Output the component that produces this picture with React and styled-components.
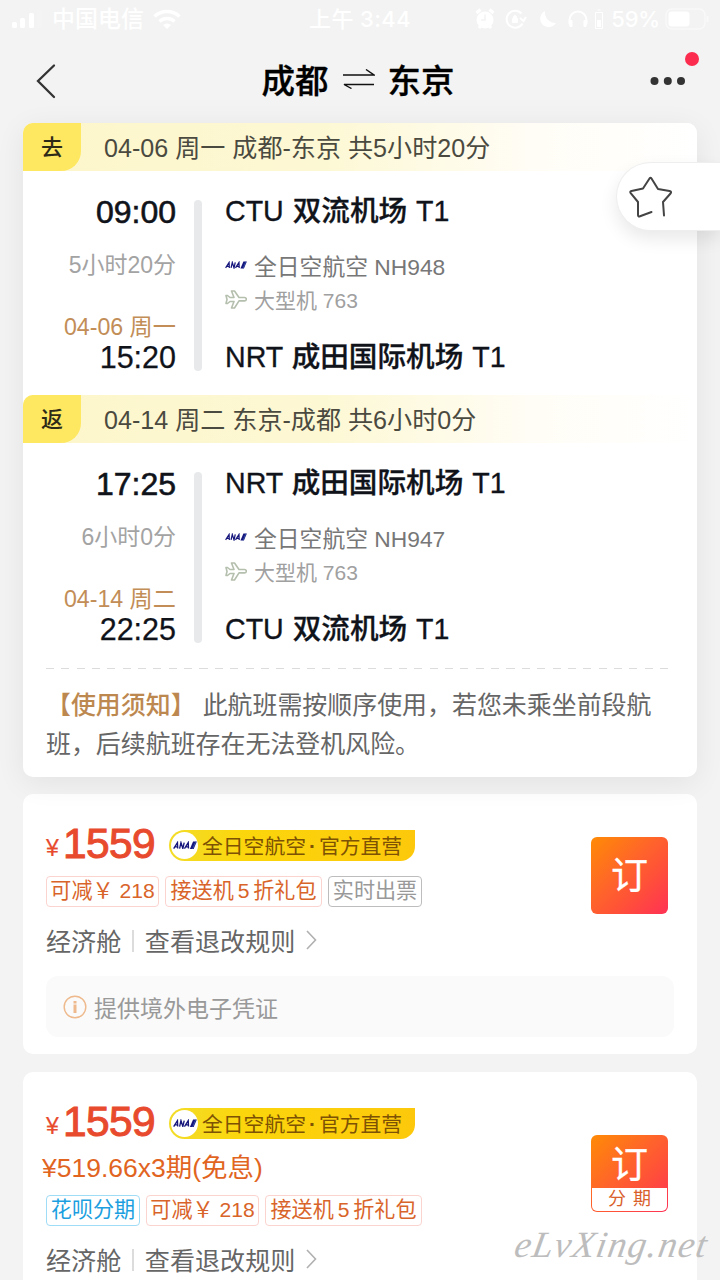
import React from 'react';
import styled, { createGlobalStyle, css } from 'styled-components';

const GlobalStyle = createGlobalStyle`
  * { box-sizing: border-box; }
  html, body { margin: 0; padding: 0; background: #f3f3f3; }
  body {
    width: 720px;
    height: 1280px;
    overflow: hidden;
    font-family: "Liberation Sans", "Noto Sans CJK SC", sans-serif;
    color: #10131a;
    white-space: nowrap;
  }
  svg { display: block; flex: none; }
`;

const Screen = styled.main`
  position: relative;
  width: 720px;
  height: 1280px;
  overflow: hidden;
  background: #f3f3f3;
`;

const StatusBar = styled.div`
  display: grid;
  grid-template-columns: 1fr auto 1fr;
  align-items: center;
  height: 38px;
  padding: 0 11px;
  color: #fff;
  font: 500 22px/38px Inter, "Noto Sans CJK SC", sans-serif;
`;

const StatusGroup = styled.div`
  display: flex;
  align-items: center;
  justify-content: ${(p) => (p.$end ? 'flex-end' : 'flex-start')};
  gap: ${(p) => p.$gap}px;
`;

const Carrier = styled.span`
  font-size: 23px;
`;

const Clock = styled.span`
  letter-spacing: 0.4px;
`;

const Percent = styled.span`
  margin-left: 3px;
  font-size: 22px;
  letter-spacing: -0.2px;
`;

const NavBar = styled.header`
  display: grid;
  grid-template-columns: 100px 1fr 100px;
  align-items: center;
  height: 85px;
`;

const BackButton = styled.div`
  padding-left: 34px;
`;

const Title = styled.h1`
  display: flex;
  align-items: center;
  justify-content: center;
  gap: 13px;
  margin: 0;
  padding: 0 4px 4px 0;
  font: 500 33.5px/48px "Noto Sans CJK SC", sans-serif;
  color: #000;
  -webkit-text-stroke: 0.3px #000;
`;

const MoreButton = styled.div`
  position: relative;
  padding-left: 30px;
`;

const UnreadDot = styled.i`
  position: absolute;
  left: 65px;
  top: -24px;
  width: 14px;
  height: 14px;
  border-radius: 50%;
  background: #fb2c4d;
`;

const FlightCard = styled.section`
  position: relative;
  z-index: 1;
  width: 674px;
  height: 654px;
  margin: 0 auto 17px;
  border-radius: 10px;
  background: #fff;
  box-shadow: 0 6px 30px rgba(0, 0, 0, 0.07);
`;

const Leg = styled.div`
  height: 272px;
`;

const LegHeader = styled.div`
  display: flex;
  height: 48px;
  line-height: 50px;
  border-radius: 10px 10px 0 0;
  background: linear-gradient(90deg, #fdf6cb 0%, #fdf8d4 45%, #fffdf5 75%, #fff 100%);
`;

const LegBadge = styled.div`
  width: 58px;
  border-radius: 10px 0 20px 0;
  background: #fee761;
  color: #2e2a18;
  font-size: 22px;
  font-weight: 500;
  text-align: center;
`;

const LegSummary = styled.div`
  padding-left: 23px;
  color: #4b4a40;
  font-size: 25.1px;
`;

const LegBody = styled.div`
  display: grid;
  grid-template-columns: 153px 8px 1fr;
  column-gap: 18px;
  height: 224px;
  padding-top: 23px;
`;

const TimeColumn = styled.div`
  display: flex;
  flex-direction: column;
  align-items: flex-end;
`;

const Time = styled.div`
  height: 36px;
  line-height: 36px;
  font-size: ${(p) => (p.$strong ? 32 : 30.5)}px;
  -webkit-text-stroke: ${(p) => (p.$strong ? 0.6 : 0.25)}px #10131a;
`;

const Duration = styled.div`
  height: 30px;
  margin: 20px 0 34px;
  color: #a3a3a3;
  font-size: 23px;
  line-height: 30px;
`;

const ArrivalDate = styled.div`
  height: 25px;
  color: #c28d57;
  font-size: 23.2px;
  line-height: 27px;
`;

const Track = styled.div`
  height: 171px;
  margin-top: 6px;
  border-radius: 4px;
  background: #e8e9eb;
`;

const StopColumn = styled.div`
  display: flex;
  flex-direction: column;
  padding-left: 5px;
`;

const Airport = styled.div`
  height: 34px;
  line-height: 34px;
  font-size: 28.6px;
  font-weight: 500;
  word-spacing: 1px;
  -webkit-text-stroke: 0.3px #10131a;
`;

const Airline = styled.div`
  display: flex;
  align-items: center;
  gap: 7px;
  height: 34px;
  margin-top: 20px;
  color: #777;
  font-size: 22.8px;
`;

const Aircraft = styled.div`
  display: flex;
  align-items: center;
  gap: 7px;
  height: 34px;
  margin-bottom: 24px;
  color: #a0a0a0;
  font-size: 21px;
`;

const Notice = styled.div`
  margin: 0 28px 0 23px;
  padding-top: 15px;
  color: #666;
  font: 400 24.95px/38.5px "Noto Sans CJK SC", sans-serif;
`;

const NoticeDash = styled.div`
  height: 1px;
  margin: 1px 28px 0 23px;
  background: repeating-linear-gradient(90deg, #dcdcdc 0 8px, transparent 8px 15.35px);
`;

const NoticeTitle = styled.b`
  margin-right: 7px;
  font-weight: 500;
  color: #bd8850;
`;

const FavoriteTab = styled.div`
  position: absolute;
  z-index: 2;
  right: 0;
  top: 162px;
  width: 104px;
  height: 69px;
  padding: 13px 0 0 12px;
  border: 1px solid #eee;
  border-right: 0;
  border-radius: 35px 0 0 35px;
  background: #fff;
  box-shadow: 0 8px 18px rgba(0, 0, 0, 0.09);
`;

const OfferCard = styled.section`
  position: relative;
  width: 674px;
  height: 260px;
  margin: 0 auto 18px;
  padding: 32px 23px 0;
  border-radius: 10px;
  background: #fff;
`;

const PriceRow = styled.div`
  display: flex;
  align-items: center;
  height: 38px;
`;

const Price = styled.div`
  display: flex;
  align-items: baseline;
  width: 123px;
  padding-top: 6px;
  color: #e84a2e;
  font-size: 42.5px;
  line-height: 38px;
  letter-spacing: -0.6px;
  -webkit-text-stroke: 1px #e84a2e;
`;

const Currency = styled.span`
  width: 17px;
  padding-bottom: 2px;
  font-size: 23px;
  -webkit-text-stroke: 0.2px #e84a2e;
  transform: translateY(-2px);
`;

const DirectBadge = styled.div`
  display: flex;
  align-items: center;
  width: 246px;
  height: 31px;
  padding-left: 2px;
  border-radius: 16px 0 15px 16px;
  background: linear-gradient(90deg, #f3dc28 0%, #fbd60c 30%, #fdc80b 100%);
  color: #7d5204;
  font: 400 20.8px/29px "Noto Sans CJK SC", sans-serif;
`;

const BadgeDot = styled.span`
  width: 13px;
  font-family: "Liberation Sans", sans-serif;
  font-weight: 700;
  text-align: center;
`;

const LogoDisc = styled.span`
  display: flex;
  align-items: center;
  justify-content: center;
  width: 27px;
  height: 27px;
  margin-right: 4px;
  border-radius: 50%;
  background: #fff;
`;

const Installment = styled.div`
  height: 38px;
  margin: 7px 0 8px -4px;
  color: #e1641f;
  font-size: 26.5px;
  line-height: 38px;
`;

const TagRow = styled.div`
  display: flex;
  gap: 6px;
  margin-top: ${(p) => (p.$flush ? 0 : 12)}px;
`;

const tagTones = {
  deal: css`color: #d9642a; border-color: #fbd3cf;`,
  plain: css`color: #999; border-color: #bdbdbd;`,
  credit: css`color: #1b9fe0; border-color: #9fdcf5;`,
};

const Tag = styled.span`
  width: ${(p) => p.$w}px;
  height: 31px;
  border: 1px solid;
  border-radius: 4px;
  font: 400 21.1px/28px "Liberation Sans", "Noto Sans CJK SC", sans-serif;
  text-align: center;
  word-spacing: ${(p) => p.$space || 0}px;
  ${(p) => tagTones[p.$tone]}
`;

const RuleRow = styled.div`
  display: flex;
  align-items: center;
  height: 38px;
  margin-top: 14px;
  color: #666;
  font: 400 25.1px/38px "Noto Sans CJK SC", sans-serif;
`;

const Divider = styled.i`
  width: 1.5px;
  height: 22px;
  margin: 2px 11px 0 11px;
  background: #dcdcdc;
`;

const InfoBox = styled.div`
  display: flex;
  align-items: center;
  gap: 7px;
  width: 628px;
  height: 61px;
  margin-top: 17px;
  padding-left: 17px;
  border-radius: 12px;
  background: #fafafa;
  color: #999;
  font: 400 23px/34px "Noto Sans CJK SC", sans-serif;
`;

const BookButton = styled.div`
  position: absolute;
  left: 568px;
  top: ${(p) => p.$top}px;
  display: flex;
  flex-direction: column;
  width: 77px;
  height: 77px;
  border-radius: 6px;
  padding: 1px;
  overflow: hidden;
  background: linear-gradient(135deg, #ff8b05 0%, #ff622c 45%, #ff5138 65%, #ff3155 100%);
  color: #fff;
  font: 400 37px/74px "Noto Sans CJK SC", sans-serif;
  text-align: center;
  -webkit-text-stroke: 0.3px;
`;

const BookLabel = styled.span`
  height: ${(p) => (p.$short ? 52 : 75)}px;
  line-height: ${(p) => (p.$short ? 53 : 71)}px;
`;

const BookPlan = styled.span`
  height: 23px;
  border-radius: 0 0 5px 5px;
  background: #fff;
  color: #d9602a;
  font-family: "Liberation Sans", "Noto Sans CJK SC", sans-serif;
  font-size: 18px;
  line-height: 23px;
  word-spacing: 2px;
  -webkit-text-stroke: 0;
`;

const Watermark = styled.div`
  position: absolute;
  z-index: 3;
  left: 515px;
  top: 1221px;
  color: #bdbdbd;
  font: italic 400 37px/48px "Liberation Serif", serif;
  letter-spacing: 1.4px;
  transform: skewX(-10deg);
`;

function AnaLogo({ width = 22 }) {
  return (
    <svg width={width} height={width * 0.36} viewBox="0 0 44 16">
      <g fill="none" stroke="#15157c" strokeWidth="2.500">
        <path d="M1 14 8 3l.5 11M4 11h5M12 14l2.500-11 3.500 11 2.500-11M21 14l7-11 .5 11M24 11h5" />
      </g>
      <path d="m31 15 6-14h7l-6 14z" fill="#15157c" />
      <path d="m35.500 15 6-14h1l-6 14z" fill="#4677c4" />
    </svg>
  );
}

function PlaneIcon() {
  return (
    <svg width="22" height="19" viewBox="0 0 22 19" fill="none" stroke="#b5bfad" strokeWidth="1.600" strokeLinejoin="round">
      <path d="M1 5.500h1.500L5 7.500h4L6.500 1h3L14 7.500h5.500q1.800 0 1.800 1.700t-1.800 1.700H14L9.500 18h-3L9 11.500H5l-2.500 2H1l1-4z" />
    </svg>
  );
}

const ChevronIcon = styled.svg`
  margin: 0 0 0 11px;
`;

function Chevron() {
  return (
    <ChevronIcon width="11" height="20" viewBox="0 0 11 20" fill="none" stroke="#b0b0b0" strokeWidth="1.600">
      <path d="m1 1 8.500 9L1 19" />
    </ChevronIcon>
  );
}

const legs = [
  {
    badge: '去', summary: '04-06 周一 成都-东京 共5小时20分', depart: '09:00', duration: '5小时20分',
    date: '04-06 周一', arrive: '15:20', from: 'CTU 双流机场 T1', flight: '全日空航空 NH948', to: 'NRT 成田国际机场 T1',
  },
  {
    badge: '返', summary: '04-14 周二 东京-成都 共6小时0分', depart: '17:25', duration: '6小时0分',
    date: '04-14 周二', arrive: '22:25', from: 'NRT 成田国际机场 T1', flight: '全日空航空 NH947', to: 'CTU 双流机场 T1',
  },
];

function FlightLeg({ leg }) {
  return (
    <Leg>
      <LegHeader>
        <LegBadge>{leg.badge}</LegBadge>
        <LegSummary>{leg.summary}</LegSummary>
      </LegHeader>
      <LegBody>
        <TimeColumn>
          <Time $strong>{leg.depart}</Time>
          <Duration>{leg.duration}</Duration>
          <ArrivalDate>{leg.date}</ArrivalDate>
          <Time>{leg.arrive}</Time>
        </TimeColumn>
        <Track />
        <StopColumn>
          <Airport>{leg.from}</Airport>
          <Airline><AnaLogo />{leg.flight}</Airline>
          <Aircraft><PlaneIcon />大型机 763</Aircraft>
          <Airport>{leg.to}</Airport>
        </StopColumn>
      </LegBody>
    </Leg>
  );
}

function OfferPrice() {
  return (
    <PriceRow>
      <Price><Currency>¥</Currency>1559</Price>
      <DirectBadge>
        <LogoDisc><AnaLogo width={24} /></LogoDisc>
        全日空航空<BadgeDot>·</BadgeDot>官方直营
      </DirectBadge>
    </PriceRow>
  );
}

function OfferRules() {
  return (
    <RuleRow>
      经济舱<Divider />查看退改规则<Chevron />
    </RuleRow>
  );
}

export default function App() {
  return (
    <Screen>
      <GlobalStyle />
      <StatusBar>
        <StatusGroup $gap={9}>
          <svg width="32" height="18" viewBox="0 0 32 18" fill="#fff">
            <rect x="1" y="12" width="5" height="6" rx="1.500" />
            <rect x="9" y="8" width="5" height="10" rx="1.500" />
            <rect x="18" y="3" width="5" height="15" rx="1.500" />
            <rect x="26" y="0" width="5" height="18" rx="1.500" opacity=".15" />
          </svg>
          <Carrier>中国电信</Carrier>
          <svg width="28" height="20" viewBox="0 0 28 20" fill="none" stroke="#fff" strokeWidth="3.600">
            <path d="M1.500 7.500a18 18 0 0 1 25 0M6.500 12.500a11 11 0 0 1 15 0" />
            <path d="M10 16a6 6 0 0 1 8 0l-4 4z" fill="#fff" stroke="none" />
          </svg>
        </StatusGroup>
        <Clock>上午 3:44</Clock>
        <StatusGroup $end $gap={5}>
          <svg width="115" height="22" viewBox="0 0 115 22" fill="none" stroke="#fff" strokeWidth="2">
            <circle cx="10" cy="12" r="8.500" fill="#fff" stroke="none" />
            <path d="m1.500 5 4-3.500M18.500 5l-4-3.500M4 20l2-2.500M16 20l-2-2.500" strokeWidth="3" />
            <path d="M10 6.500V12H6" stroke="#f3f3f3" strokeWidth="1.500" />
            <path d="M46.500 5.500a8.500 8.500 0 1 0 1 10M45 10l3.500 3 2.500-4" />
            <path d="M37.500 10.500h5v4h-5zM38.500 10V9a1.500 1.500 0 0 1 3 0v1" fill="#fff" strokeWidth="1" />
            <path d="M70 3a8.500 8.500 0 1 0 11 12A10.500 10.500 0 0 1 70 3z" fill="#fff" stroke="none" />
            <path d="M94.500 16v-4a8.500 8.500 0 0 1 17 0v4" />
            <path d="M94 12.500h3v6h-2zM109 12.500h3l-1 6h-2z" fill="#fff" strokeWidth="1" />
          </svg>
          <svg width="8" height="20" viewBox="0 0 8 20" fill="none" stroke="#fff">
            <path d="M.5 3.500h7v16h-7zM2.500 1h3" />
            <path d="M2 11h4v7H2z" fill="#fff" stroke="none" />
          </svg>
          <Percent>59%</Percent>
          <svg width="44" height="22" viewBox="0 0 44 22" fill="none" stroke="#fff" strokeOpacity=".5">
            <rect x="1" y="1" width="39" height="20" rx="6" strokeWidth="1.500" />
            <rect x="3.500" y="3.500" width="21" height="15" rx="3" fill="#fff" stroke="none" />
            <path d="M42.500 8v6" strokeWidth="2" />
          </svg>
        </StatusGroup>
      </StatusBar>

      <NavBar>
        <BackButton>
          <svg width="24" height="36" viewBox="0 0 24 36" fill="none" stroke="#333" strokeWidth="2.300" strokeLinecap="round">
            <path d="M20 2.500 4 18l16 16" />
          </svg>
        </BackButton>
        <Title>
          成都
          <svg width="33" height="20" viewBox="0 0 33 20" fill="none" stroke="#111" strokeWidth="1.400">
            <path d="M1 6h31l-8-5.500M32 15.500H2l7.500 4" />
          </svg>
          东京
        </Title>
        <MoreButton>
          <svg width="36" height="10" viewBox="0 0 36 10" fill="#333">
            <circle cx="4.500" cy="5" r="4" />
            <circle cx="17.800" cy="5" r="4" />
            <circle cx="31" cy="5" r="4" />
          </svg>
          <UnreadDot />
        </MoreButton>
      </NavBar>

      <FlightCard>
        {legs.map((leg) => <FlightLeg key={leg.badge} leg={leg} />)}
        <NoticeDash />
        <Notice>
          <NoticeTitle>【使用须知】</NoticeTitle>此航班需按顺序使用，若您未乘坐前段航<br />
          班，后续航班存在无法登机风险。
        </Notice>
      </FlightCard>

      <OfferCard>
        <OfferPrice />
        <TagRow>
          <Tag $tone="deal" $w={113}>可减￥ 218</Tag>
          <Tag $tone="deal" $w={157} $space={-2}>接送机 5 折礼包</Tag>
          <Tag $tone="plain" $w={94}>实时出票</Tag>
        </TagRow>
        <OfferRules />
        <InfoBox>
          <svg width="24" height="24" viewBox="0 0 24 24" fill="none" stroke="#eeb98c">
            <circle cx="12" cy="12" r="10.800" strokeWidth="1.400" />
            <path d="M12 9.500V18M12 6v2.500" strokeWidth="3" />
          </svg>
          提供境外电子凭证
        </InfoBox>
        <BookButton $top={43}><BookLabel>订</BookLabel></BookButton>
      </OfferCard>

      <OfferCard>
        <OfferPrice />
        <Installment>¥519.66x3期(免息)</Installment>
        <TagRow $flush>
          <Tag $tone="credit" $w={94}>花呗分期</Tag>
          <Tag $tone="deal" $w={113}>可减￥ 218</Tag>
          <Tag $tone="deal" $w={157} $space={-2}>接送机 5 折礼包</Tag>
        </TagRow>
        <OfferRules />
        <BookButton $top={63}>
          <BookLabel $short>订</BookLabel>
          <BookPlan>分 期</BookPlan>
        </BookButton>
      </OfferCard>

      <FavoriteTab>
        <svg width="44" height="42" viewBox="0 0 44 42" fill="none" stroke="#444" strokeWidth="2" strokeLinecap="round" strokeLinejoin="round">
          <path d="M35 39.500 34 26l7.500-8.500q1.500-2-1-2.500L29 13 22.500 2.500q-1-1.500-2 0L14 12.500 2.500 15q-2 .5-.8 2.200L9 26v13q0 2 2 1.200L22.500 36" />
        </svg>
      </FavoriteTab>
      <Watermark>eLvXing.net</Watermark>
    </Screen>
  );
}
